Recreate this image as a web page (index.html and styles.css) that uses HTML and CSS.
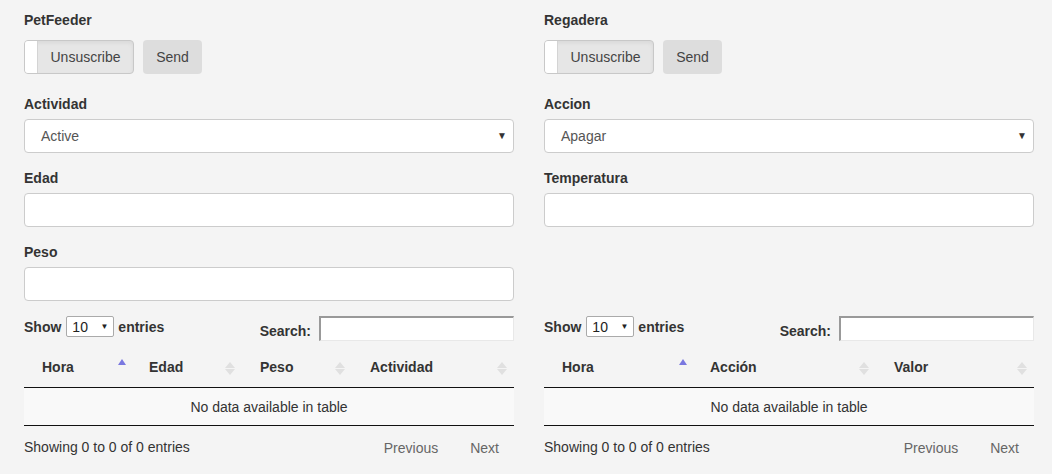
FILE: index.html
```html
<!DOCTYPE html>
<html>
<head>
<meta charset="utf-8">
<link rel="stylesheet" href="styles.css">
</head>
<body>
<div class="page">
  <section class="col">
    <div class="group group-top">
      <label class="lbl">PetFeeder</label>
      <div class="btn-row">
        <button class="toggle"><span class="knob"></span><span class="toggle-text">Unsuscribe</span></button>
        <button class="send">Send</button>
      </div>
    </div>
    <div class="group">
      <label class="lbl">Actividad</label>
      <div class="select"><span>Active</span><span class="caret">▼</span></div>
    </div>
    <div class="group">
      <label class="lbl">Edad</label>
      <div class="input"></div>
    </div>
    <div class="group">
      <label class="lbl">Peso</label>
      <div class="input"></div>
    </div>
    <div class="dt">
      <div class="dt-top">
        <div class="dt-length">Show <span class="len-select">10<span class="len-caret">▼</span></span> entries</div>
        <div class="dt-filter">Search: <span class="search-box"></span></div>
      </div>
      <table class="tbl">
        <thead>
          <tr>
            <th class="asc w-l1">Hora</th>
            <th class="both w-l2">Edad</th>
            <th class="both w-l3">Peso</th>
            <th class="both">Actividad</th>
          </tr>
        </thead>
        <tbody>
          <tr><td colspan="4">No data available in table</td></tr>
        </tbody>
      </table>
      <div class="dt-bottom">
        <div class="dt-info">Showing 0 to 0 of 0 entries</div>
        <div class="dt-pages"><span class="pg">Previous</span><span class="pg">Next</span></div>
      </div>
    </div>
  </section>

  <section class="col">
    <div class="group group-top">
      <label class="lbl">Regadera</label>
      <div class="btn-row">
        <button class="toggle"><span class="knob"></span><span class="toggle-text">Unsuscribe</span></button>
        <button class="send">Send</button>
      </div>
    </div>
    <div class="group">
      <label class="lbl">Accion</label>
      <div class="select"><span>Apagar</span><span class="caret">▼</span></div>
    </div>
    <div class="group">
      <label class="lbl">Temperatura</label>
      <div class="input"></div>
    </div>
    <div class="group spacer-group"></div>
    <div class="dt">
      <div class="dt-top">
        <div class="dt-length">Show <span class="len-select">10<span class="len-caret">▼</span></span> entries</div>
        <div class="dt-filter">Search: <span class="search-box"></span></div>
      </div>
      <table class="tbl">
        <thead>
          <tr>
            <th class="asc w-r1">Hora</th>
            <th class="both w-r2">Acción</th>
            <th class="both">Valor</th>
          </tr>
        </thead>
        <tbody>
          <tr><td colspan="3">No data available in table</td></tr>
        </tbody>
      </table>
      <div class="dt-bottom">
        <div class="dt-info">Showing 0 to 0 of 0 entries</div>
        <div class="dt-pages"><span class="pg">Previous</span><span class="pg">Next</span></div>
      </div>
    </div>
  </section>
</div>
</body>
</html>
```

FILE: styles.css
```css
* { box-sizing: border-box; }
html, body {
  margin: 0;
  padding: 0;
  background: #f4f4f4;
}
body {
  font-family: "Liberation Sans", Arial, sans-serif;
  font-size: 14px;
  line-height: 20px;
  color: #333;
}
.page {
  display: flex;
  gap: 30px;
  padding: 10px 18px 0 24px;
}
.col {
  width: 490px;
  display: flex;
  flex-direction: column;
}
.group {
  margin-bottom: 15px;
}
.group-top {
  margin-bottom: 20px;
}
.lbl {
  display: block;
  font-weight: bold;
  margin-bottom: 5px;
}
.group-top .lbl { margin-bottom: 10px; }
.btn-row {
  display: flex;
  gap: 9px;
}
button {
  font-family: inherit;
  font-size: 14px;
  color: #333;
}
.toggle {
  display: flex;
  align-items: stretch;
  height: 34px;
  width: 110px;
  padding: 0;
  background: #e6e6e6;
  border: 1px solid #c8c8c8;
  border-radius: 4px;
  box-shadow: inset 0 2px 4px rgba(0,0,0,0.06);
}
.knob {
  width: 13px;
  background: #fff;
  border-radius: 3px 0 0 3px;
  border-right: 1px solid #d4d4d4;
}
.toggle-text {
  flex: 1;
  display: flex;
  align-items: center;
  justify-content: center;
  color: #444;
}
.send {
  height: 34px;
  width: 59px;
  padding: 0;
  background: #dddddd;
  border: none;
  border-radius: 4px;
  color: #444;
}
.select, .input {
  height: 34px;
  background: #fff;
  border: 1px solid #ccc;
  border-radius: 4px;
}
.select {
  display: flex;
  align-items: center;
  justify-content: space-between;
  padding: 0 6px 0 16px;
  color: #555;
}
.caret {
  font-size: 10px;
  color: #333;
}
.spacer-group { height: 59px; }
.dt-top {
  display: flex;
  justify-content: space-between;
  align-items: flex-start;
  height: 33px;
}
.dt-length {
  font-weight: bold;
  display: flex;
  align-items: center;
  gap: 4px;
}
.len-select {
  display: inline-flex;
  align-items: center;
  justify-content: space-between;
  width: 48px;
  height: 21px;
  margin-left: 1px;
  background: #fff;
  border: 1px solid #aaa;
  border-radius: 2px;
  padding: 0 5px;
  font-weight: normal;
  color: #222;
}
.len-caret { font-size: 8px; }
.dt-filter {
  font-weight: bold;
  display: flex;
  align-items: flex-end;
  gap: 8px;
  line-height: 19px;
}
.search-box {
  display: inline-block;
  width: 195px;
  height: 25px;
  background: #fff;
  border-style: solid;
  border-width: 2px 1px 1px 2px;
  border-color: #999 #e8e8e8 #e8e8e8 #999;
}
.tbl {
  width: 100%;
  border-collapse: collapse;
  table-layout: fixed;
}
.w-l1 { width: 107px; }
.w-l2 { width: 111px; }
.w-l3 { width: 110px; }
.w-r1 { width: 148px; }
.w-r2 { width: 184px; }
.tbl th {
  text-align: left;
  font-weight: bold;
  padding: 10px 18px 11px;
  line-height: 17px;
  border-bottom: 1px solid #111;
  position: relative;
}
.tbl th::after {
  content: "";
  position: absolute;
  right: 10px;
  top: 50%;
}
.tbl th.asc::after {
  margin-top: -9px;
  border-left: 4px solid transparent;
  border-right: 4px solid transparent;
  border-bottom: 6px solid #7a78e0;
  right: 5px;
}
.tbl th.both::before {
  content: "";
  position: absolute;
  right: 7px;
  top: 50%;
  margin-top: -6px;
  border-left: 5px solid transparent;
  border-right: 5px solid transparent;
  border-bottom: 6px solid #e0e0e0;
}
.tbl th.both::after {
  right: 7px;
  margin-top: 1px;
  border-left: 5px solid transparent;
  border-right: 5px solid transparent;
  border-top: 6px solid #e0e0e0;
}
.tbl td {
  background: #f9f9f9;
  text-align: center;
  padding: 8px 10px;
  line-height: 20px;
  height: 38px;
  border-bottom: 1px solid #111;
}
.dt-bottom {
  display: flex;
  justify-content: space-between;
  padding-top: 11px;
}
.dt-pages {
  display: flex;
  gap: 4px;
  margin-top: 1px;
  margin-right: 1px;
}
.pg {
  color: #666;
  padding: 0 14px;
}
```
